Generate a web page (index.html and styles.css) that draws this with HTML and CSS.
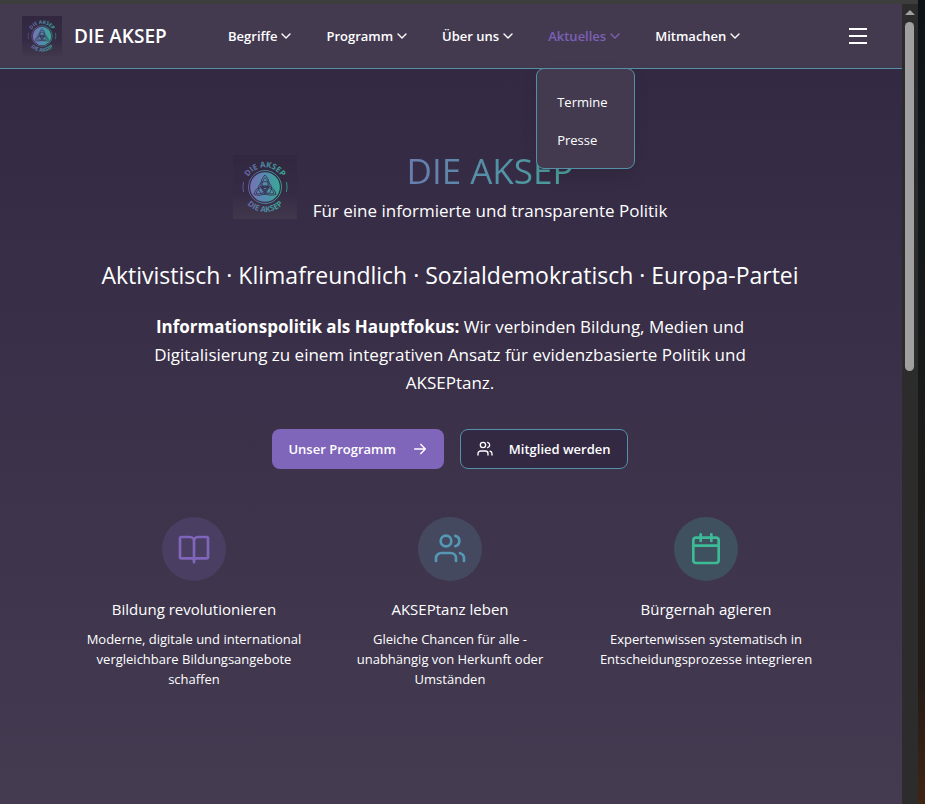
FILE: index.html
```html
<!DOCTYPE html>
<html lang="de">
<head>
<meta charset="utf-8">
<meta name="viewport" content="width=device-width, initial-scale=1">
<title>DIE AKSEP</title>
<link rel="stylesheet" href="styles.css">
</head>
<body>
<svg class="defs" width="0" height="0" aria-hidden="true">
  <defs>
    <linearGradient id="brand" gradientUnits="userSpaceOnUse" x1="8" y1="0" x2="56" y2="0">
      <stop offset="0" stop-color="#7459aa"/><stop offset=".5" stop-color="#5089a5"/><stop offset="1" stop-color="#30b08e"/>
    </linearGradient>
    <linearGradient id="disc" gradientUnits="userSpaceOnUse" x1="17" y1="0" x2="48" y2="0">
      <stop offset="0" stop-color="#7872b4"/><stop offset=".5" stop-color="#528cae"/><stop offset="1" stop-color="#35ac90"/>
    </linearGradient>
    <linearGradient id="tile" x1="0" y1="0" x2="0" y2="1">
      <stop offset="0" stop-color="#312840"/><stop offset=".6" stop-color="#352b45"/><stop offset="1" stop-color="#41384c"/>
    </linearGradient>
    <path id="arc-top" d="M12.500 32a19.500 19.500 0 0 1 39 0"/>
    <path id="arc-bottom" d="M7 32a25 25 0 0 0 50 0"/>
    <symbol id="logo" viewBox="0 0 64 64">
      <rect width="64" height="64" fill="url(#tile)"/>
      <g fill="url(#brand)" class="seal-text">
        <text><textPath href="#arc-top" startOffset="50%" text-anchor="middle">DIE AKSEP</textPath></text>
        <text><textPath href="#arc-bottom" startOffset="50%" text-anchor="middle">DIE AKSEP</textPath></text>
      </g>
      <g fill="none" stroke="url(#brand)">
        <path d="M10.500 27a22 22 0 0 0 0 10M53.500 27a22 22 0 0 1 0 10" stroke-width=".8"/>
        <circle cx="32" cy="32" r="16.500" stroke-width=".9"/>
      </g>
      <circle cx="32" cy="32" r="14.800" fill="url(#disc)"/>
      <g fill="none" stroke="#352d4b" stroke-width=".8">
        <path d="M32 20c-5 5-6 12 0 17 6-5 5-12 0-17zM21 39.500c7 2 13 0 14.500-7.500-7-3-13 .5-14.500 7.500zM43 39.500c-7 2-13 0-14.500-7.500 7-3 13 .5 14.500 7.500z"/>
        <path d="M32 22.500c-3.500 4-4 9 0 12.500 4-3.500 4-8.500 0-12.500zM23 38.500c5 1 9.500-.5 11-5.500-5-2-9.500.5-11 5.500zM41 38.500c-5 1-9.500-.5-11-5.500 5-2 9.500.5 11 5.500z"/>
        <circle cx="32" cy="33" r="6.500"/>
      </g>
    </symbol>
    <symbol id="chevron" viewBox="0 0 12 12"><path d="M2 4l4 4 4-4"/></symbol>
    <symbol id="arrow" viewBox="0 0 24 24"><path d="M4 12h16M13 5l7 7-7 7"/></symbol>
    <symbol id="users" viewBox="0 0 24 24"><circle cx="9" cy="6" r="4"/><path d="M1.500 21v-2a4 4 0 0 1 4-4h7a4 4 0 0 1 4 4v2M16 2.130a4 4 0 0 1 0 7.750M22.500 21v-2a4 4 0 0 0-3-3.850"/></symbol>
    <symbol id="book" viewBox="0 0 24 24"><path d="M12 5v17M2.500 3h6.500a3 3 0 0 1 3 3 3 3 0 0 1 3-3h6.500a1 1 0 0 1 1 1v14a1 1 0 0 1-1 1h-7.500a2 2 0 0 0-2 2 2 2 0 0 0-2-2h-7.500a1 1 0 0 1-1-1v-14a1 1 0 0 1 1-1z"/></symbol>
    <symbol id="calendar" viewBox="0 0 24 24"><path d="M8 1v5M16 1v5M2.500 9.500h19"/><rect x="2.500" y="3.500" width="19" height="19" rx="2"/></symbol>
  </defs>
</svg>
<div class="window">
  <div class="page">
    <header class="header">
      <a class="brand" href="#"><svg class="brand-logo" aria-hidden="true"><use href="#logo"/></svg>DIE AKSEP</a>
      <nav class="nav" aria-label="Hauptnavigation">
        <button class="nav-item" type="button">Begriffe<svg class="icon chevron" aria-hidden="true"><use href="#chevron"/></svg></button>
        <button class="nav-item" type="button">Programm<svg class="icon chevron" aria-hidden="true"><use href="#chevron"/></svg></button>
        <button class="nav-item" type="button">Über uns<svg class="icon chevron" aria-hidden="true"><use href="#chevron"/></svg></button>
        <div class="nav-group">
          <button class="nav-item active" type="button" aria-expanded="true">Aktuelles<svg class="icon chevron" aria-hidden="true"><use href="#chevron"/></svg></button>
          <div class="dropdown">
            <a href="#">Termine</a>
            <a href="#">Presse</a>
          </div>
        </div>
        <button class="nav-item" type="button">Mitmachen<svg class="icon chevron" aria-hidden="true"><use href="#chevron"/></svg></button>
      </nav>
      <button class="menu" type="button" aria-label="Menü"><span></span><span></span><span></span></button>
    </header>
    <main class="hero">
      <div class="title">
        <svg class="title-logo" aria-hidden="true"><use href="#logo"/></svg>
        <div>
          <h1>DIE AKSEP</h1>
          <p class="subtitle">Für eine informierte und transparente Politik</p>
        </div>
      </div>
      <p class="tagline">Aktivistisch · Klimafreundlich · Sozialdemokratisch · Europa-Partei</p>
      <p class="lead"><strong>Informationspolitik als Hauptfokus:</strong> Wir verbinden Bildung, Medien und Digitalisierung zu einem integrativen Ansatz für evidenzbasierte Politik und AKSEPtanz.</p>
      <div class="actions">
        <a class="button primary" href="#">Unser Programm<svg class="icon small" aria-hidden="true"><use href="#arrow"/></svg></a>
        <a class="button outline" href="#"><svg class="icon small" aria-hidden="true"><use href="#users"/></svg>Mitglied werden</a>
      </div>
      <section class="features">
        <article class="feature">
          <div class="badge purple"><svg class="icon large" aria-hidden="true"><use href="#book"/></svg></div>
          <h2>Bildung revolutionieren</h2>
          <p>Moderne, digitale und international vergleichbare Bildungsangebote schaffen</p>
        </article>
        <article class="feature">
          <div class="badge blue"><svg class="icon large" aria-hidden="true"><use href="#users"/></svg></div>
          <h2>AKSEPtanz leben</h2>
          <p>Gleiche Chancen für alle - unabhängig von Herkunft oder Umständen</p>
        </article>
        <article class="feature">
          <div class="badge green"><svg class="icon large" aria-hidden="true"><use href="#calendar"/></svg></div>
          <h2>Bürgernah agieren</h2>
          <p>Expertenwissen systematisch in Entscheidungsprozesse integrieren</p>
        </article>
      </section>
    </main>
  </div>
  <div class="rail" aria-hidden="true"><div class="rail-arrow"></div><div class="rail-thumb"></div></div>
  <div class="desktop" aria-hidden="true"></div>
</div>
</body>
</html>
```
FILE: styles.css
```css
* { box-sizing: border-box; }
body {
  margin: 0;
  font-family: "Open Sans", "Noto Sans", sans-serif;
  font-size: 13px;
  line-height: 20px;
  color: #fff;
  background: #2c2c2c;
}
h1, h2, p { margin: 0; }
a { color: inherit; text-decoration: none; }
button { font: inherit; color: inherit; background: none; border: 0; padding: 0; }
.defs { position: absolute; }
.icon { flex: none; fill: none; stroke: currentColor; stroke-width: 2; stroke-linecap: round; stroke-linejoin: round; }
.chevron { width: 12px; height: 12px; stroke-width: 1.4; }
.small { width: 16px; height: 16px; }
.large { width: 32px; height: 32px; }
.seal-text { font-size: 8px; font-weight: 700; }

.window { display: flex; min-height: 100vh; }
.page { flex: 1; min-width: 0; display: flex; flex-direction: column; border-top: 4px solid #3d3d3d; }

.header {
  display: flex;
  align-items: center;
  height: 65px;
  padding: 0 35px 0 22px;
  background: #433a50;
  border-bottom: 1px solid #5590a6;
}
.brand { display: flex; align-items: center; gap: 12px; width: 206px; font-size: 19px; font-weight: 600; }
.brand-logo { width: 40px; height: 40px; }
.nav { display: flex; gap: 34px; align-self: stretch; }
.nav-item { display: flex; align-items: center; gap: 3px; font-weight: 600; height: 100%; white-space: nowrap; }
.nav-group { position: relative; }
.active { color: #7c60b6; }
.dropdown {
  position: absolute;
  z-index: 1;
  top: 100%;
  left: -12px;
  width: 99px;
  padding: 14px 20px 9px;
  background: #433a50;
  border: 1px solid #5590a6;
  border-radius: 8px;
  box-shadow: 0 8px 16px rgba(0, 0, 0, .1);
}
.dropdown a { display: block; padding: 9px 0; }
.menu { display: flex; flex-direction: column; gap: 5px; margin-left: auto; }
.menu span { width: 18px; height: 2px; background: #fff; }

.hero {
  flex: 1;
  display: flex;
  flex-direction: column;
  align-items: center;
  padding: 80px 26px 96px 24px;
  text-align: center;
  background: linear-gradient(#332943, #443b51);
}
.title { display: flex; align-items: center; gap: 16px; }
.title-logo { width: 64px; height: 64px; }
h1 {
  font-size: 35px;
  line-height: 44px;
  font-weight: 400;
  color: transparent;
  background: linear-gradient(90deg, #8066ba, #5590a6, #3cb890);
  -webkit-background-clip: text;
  background-clip: text;
}
.subtitle { margin-top: 4px; font-size: 17px; line-height: 28px; }
.tagline { margin-top: 34px; font-size: 23px; line-height: 32px; }
.lead { max-width: 624px; margin-top: 22px; font-size: 17px; line-height: 28px; }
.lead strong { font-weight: 700; }
.actions { display: flex; gap: 16px; margin-top: 32px; }
.button { display: flex; align-items: center; gap: 16px; height: 40px; padding: 0 16px; border-radius: 8px; font-weight: 600; white-space: nowrap; }
.primary { background: #8066ba; }
.outline { background: #332943; border: 1px solid #5590a6; }
.features { display: grid; grid-template-columns: repeat(3, 1fr); gap: 32px; width: 100%; max-width: 736px; margin-top: 48px; }
.feature { display: flex; flex-direction: column; align-items: center; }
.badge { display: grid; place-items: center; width: 64px; height: 64px; border-radius: 50%; }
.purple { color: #8066ba; background: #4a3e62; }
.blue { color: #5598b4; background: #444960; }
.green { color: #3dba96; background: #3f505e; }
.feature h2 { margin: 16px 0 8px; font-size: 15px; line-height: 24px; font-weight: 400; }

.rail { width: 16px; padding-right: 1px; background: #2c2c2c; border-top: 4px solid #3d3d3d; display: flex; flex-direction: column; align-items: center; }
.rail-arrow { margin: 6px 0 7px; border: 5px solid transparent; border-top: 0; border-bottom-color: #a0a0a0; }
.rail-thumb { width: 9px; height: 43.4vh; background: #a0a0a0; border-radius: 5px; }
.desktop { width: 7px; background: linear-gradient(#0c1318, #12181b 25%, #1c1b19 60%, #241b16 85%, #402414); }
```
